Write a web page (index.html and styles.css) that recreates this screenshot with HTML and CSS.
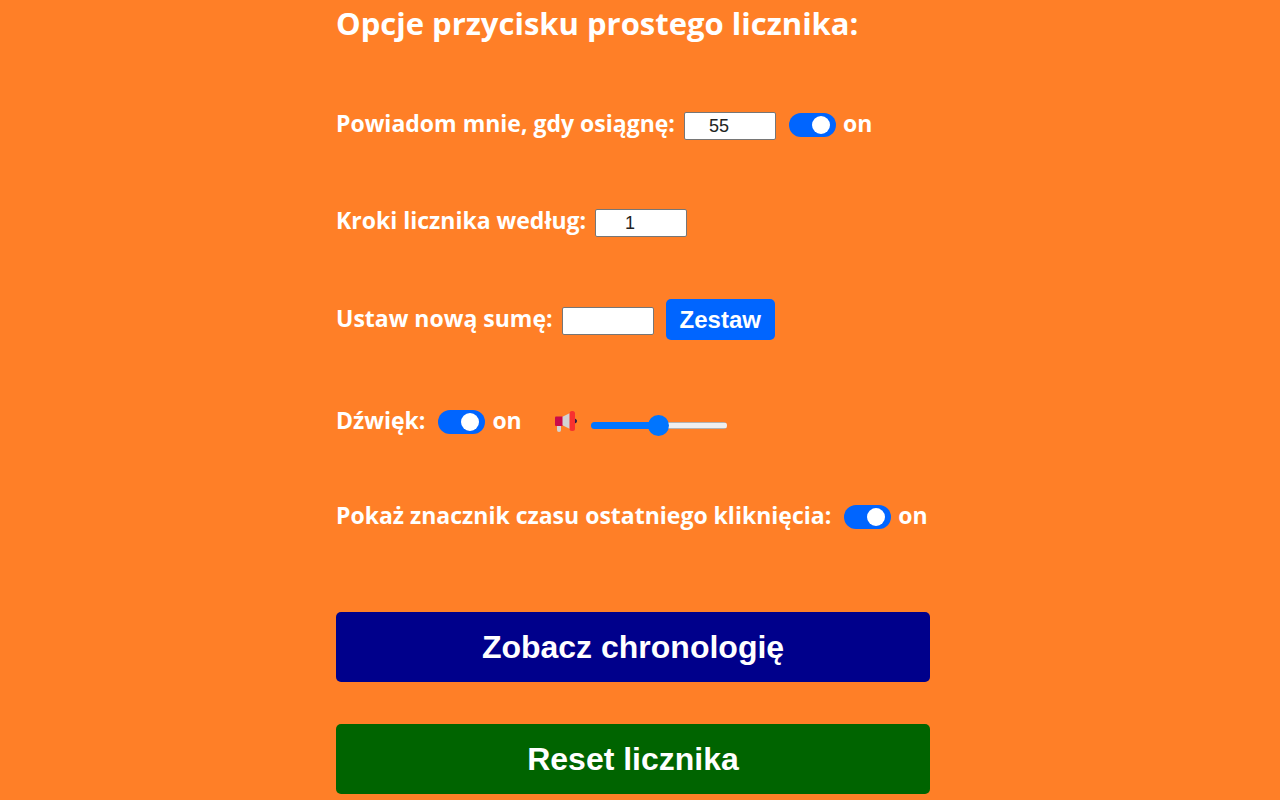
FILE: index.html
```
<!DOCTYPE html>
<html lang="pl">
<head>
<meta charset="utf-8">
<meta name="viewport" content="width=device-width, initial-scale=1">
<title>Opcje przycisku prostego licznika</title>
<link rel="stylesheet" href="styles.css">
</head>
<body>
<main class="options">
  <h1 class="title">Opcje przycisku prostego licznika:</h1>
  <div class="row">
    <label for="notify">Powiadom mnie, gdy osiągnę:</label>
    <input class="number" id="notify" type="text" inputmode="numeric" value="55">
    <label class="toggle"><input class="switch" type="checkbox" checked>on</label>
  </div>
  <div class="row row-step">
    <label for="step">Kroki licznika według:</label>
    <input class="number" id="step" type="text" inputmode="numeric" value="1">
  </div>
  <div class="row row-set">
    <label for="total">Ustaw nową sumę:</label>
    <input class="number" id="total" type="text" inputmode="numeric">
    <button class="set" type="button">Zestaw</button>
  </div>
  <div class="row row-sound">
    <label for="sound">Dźwięk:</label>
    <label class="toggle"><input class="switch" id="sound" type="checkbox" checked>on</label>
    <svg class="horn" viewBox="0 0 24 22" aria-hidden="true">
      <path fill="#d3d3d3" d="M3 14h4v5q0 2-2 2t-2-2z"/>
      <path fill="#d3d3d3" d="M8 6l8-4v16l-8-4z"/>
      <path fill="#ca0b4a" d="M2 5.500h6.500v9.500H2q-1 0-1-1V6.500q0-1 1-1z"/>
      <path fill="#321b41" d="M20 7.500q3 .5 3 2.500t-3 2.500z"/>
      <rect fill="#f8312f" x="15.500" y="0" width="5.500" height="20" rx="2.500"/>
    </svg>
    <input class="volume" type="range" aria-label="Głośność" value="50">
  </div>
  <div class="row">
    <label for="stamp">Pokaż znacznik czasu ostatniego kliknięcia:</label>
    <label class="toggle"><input class="switch" id="stamp" type="checkbox" checked>on</label>
  </div>
  <button class="action history" type="button">Zobacz chronologię</button>
  <button class="action reset" type="button">Reset licznika</button>
</main>
</body>
</html>
```
FILE: styles.css
```
* { box-sizing: border-box; }
body {
  margin: 0;
  background: #ff7f27;
  color: #fff;
  font: bold 23px/32px "Open Sans", "Noto Sans", sans-serif;
}
.options {
  display: flex;
  flex-direction: column;
  max-width: 608px;
  margin: 0 auto;
  padding-right: 14px;
}
.title { margin: 0 0 55px; font-size: 31px; line-height: 46px; }
.row { display: flex; align-items: center; gap: 9px; min-height: 44px; margin-bottom: 53px; white-space: nowrap; }
.row-step { margin-bottom: 54px; }
.row-set { margin-bottom: 58px; }
.row-sound { margin-bottom: 51px; }
.number {
  width: 92px;
  height: 28px;
  margin: 6px 0 0;
  padding: 0 24px 0 2px;
  border: 1px solid #767676;
  border-radius: 2px;
  background: #fff;
  color: #222;
  font: 18px "Liberation Sans", Arial, sans-serif;
  text-align: center;
}
.toggle { display: flex; align-items: center; gap: 7px; margin-left: 4px; }
.switch {
  appearance: none;
  display: flex;
  align-items: center;
  justify-content: flex-end;
  width: 47px;
  height: 24px;
  margin: 4px 0 0;
  padding: 0 6px;
  border-radius: 12px;
  background: #0065ff;
}
.switch::before { content: ""; width: 18px; height: 18px; border-radius: 50%; background: #fff; }
.switch:not(:checked) { justify-content: flex-start; background: #888; }
.set {
  height: 41px;
  margin: 3px 0 0 3px;
  padding: 0 14px;
  border: 0;
  border-radius: 5px;
  background: #0065ff;
  color: #fff;
  font: bold 24px "Liberation Sans", Arial, sans-serif;
}
.horn { width: 24px; height: 22px; margin: 4px 0 0 23px; }
.volume {
  appearance: none;
  width: 136px;
  height: 22px;
  margin: 10px 0 0 4px;
  background: transparent;
}
.volume::-webkit-slider-runnable-track {
  height: 7px;
  border-radius: 4px;
  background: linear-gradient(90deg, #0075ff 50%, transparent 50%), linear-gradient(#b2b2b2 1px, #efefef 1px 6px, #b2b2b2 6px);
}
.volume::-webkit-slider-thumb {
  appearance: none;
  width: 21px;
  height: 21px;
  margin-top: -7px;
  border-radius: 50%;
  background: #0075ff;
}
.action {
  height: 70px;
  border: 0;
  border-radius: 5px;
  color: #fff;
  font: bold 32px "Liberation Sans", Arial, sans-serif;
}
.history { margin: 22px 0 42px; background: #00008b; }
.reset { background: #006400; }
```
